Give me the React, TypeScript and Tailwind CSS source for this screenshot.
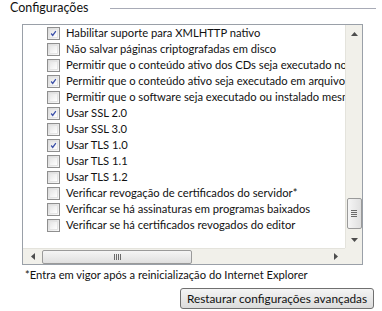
import React from 'react';

const rows: { label: string; checked: boolean }[] = [
  { label: 'Habilitar suporte para XMLHTTP nativo', checked: true },
  { label: 'Não salvar páginas criptografadas em disco', checked: false },
  { label: 'Permitir que o conteúdo ativo dos CDs seja executado no computador', checked: false },
  { label: 'Permitir que o conteúdo ativo seja executado em arquivos do computador', checked: true },
  { label: 'Permitir que o software seja executado ou instalado mesmo se a assinatura for inválida', checked: false },
  { label: 'Usar SSL 2.0', checked: true },
  { label: 'Usar SSL 3.0', checked: false },
  { label: 'Usar TLS 1.0', checked: true },
  { label: 'Usar TLS 1.1', checked: false },
  { label: 'Usar TLS 1.2', checked: false },
  { label: 'Verificar revogação de certificados do servidor*', checked: false },
  { label: 'Verificar se há assinaturas em programas baixados', checked: false },
  { label: 'Verificar se há certificados revogados do editor', checked: false },
];

function CheckBox({ checked }: { checked: boolean }) {
  return (
    <div className="w-[13px] h-[13px] shrink-0 border border-[#8f8f8f] bg-gradient-to-br from-[#d8d8d8] to-[#fafafa] p-px">
      <div className="w-full h-full border border-[#e4e4e4] bg-gradient-to-br from-[#e6e6e6] to-[#ffffff] flex items-center justify-center">
        {checked && (
          <svg width="9" height="9" viewBox="0 0 9 9">
            <path d="M1.5 4.5 L3.5 7 L7.5 1.5" fill="none" stroke="#3a4fa8" strokeWidth="1.6" />
          </svg>
        )}
      </div>
    </div>
  );
}

export default function App() {
  return (
    <div className="w-[382px] h-[311px] bg-white text-[11.2px] text-[#111] font-['Lato',sans-serif] leading-none overflow-hidden">
      <div className="flex items-center pl-[10px] pr-[6px] h-[17px]">
        <span className="text-[12.5px]">Configurações</span>
        <div className="flex-1 h-px bg-[#a8abb6] ml-[22px]" />
      </div>

      <div className="ml-[22px] mt-[7px] w-[341px] h-[241px] border border-[#9aa0a8] grid grid-cols-[1fr_17px] grid-rows-[1fr_16px]">
        <div className="overflow-hidden">
          {rows.map((r) => (
            <div key={r.label} className="h-[16px] flex items-center pl-[24px] gap-[6px] whitespace-nowrap">
              <CheckBox checked={r.checked} />
              <span>{r.label}</span>
            </div>
          ))}
        </div>

        <div className="bg-[#f1f0ea] border-l border-[#e4e3dc] flex flex-col items-center">
          <div className="h-[17px] w-full flex items-center justify-center">
            <svg width="7" height="4" viewBox="0 0 7 4"><path d="M0 4 L3.5 0 L7 4 Z" fill="#4d4d4d" /></svg>
          </div>
          <div className="flex-1" />
          <div className="w-[15px] h-[31px] border border-[#9a9a9a] rounded-[2px] bg-gradient-to-r from-[#f5f5f5] to-[#e0e0e0] flex flex-col items-center justify-center gap-px">
            <div className="w-[6px] h-px bg-[#6a6a6a]" />
            <div className="w-[6px] h-px bg-[#6a6a6a]" />
            <div className="w-[6px] h-px bg-[#6a6a6a]" />
            <div className="w-[6px] h-px bg-[#6a6a6a]" />
          </div>
          <div className="h-[16px] w-full flex items-center justify-center mt-[3px]">
            <svg width="7" height="4" viewBox="0 0 7 4"><path d="M0 0 L3.5 4 L7 0 Z" fill="#4d4d4d" /></svg>
          </div>
        </div>

        <div className="bg-[#f1f0ea] border-t border-[#e4e3dc] flex items-center">
          <div className="w-[19px] h-full flex items-center justify-center">
            <svg width="4" height="7" viewBox="0 0 4 7"><path d="M4 0 L0 3.5 L4 7 Z" fill="#4d4d4d" /></svg>
          </div>
          <div className="w-[150px] h-[14px] border border-[#9a9a9a] rounded-[2px] bg-gradient-to-b from-[#f5f5f5] to-[#e0e0e0] flex items-center justify-center gap-px">
            <div className="w-px h-[6px] bg-[#6a6a6a]" />
            <div className="w-px h-[6px] bg-[#6a6a6a]" />
            <div className="w-px h-[6px] bg-[#6a6a6a]" />
            <div className="w-px h-[6px] bg-[#6a6a6a]" />
          </div>
          <div className="flex-1" />
          <div className="w-[19px] h-full flex items-center justify-center">
            <svg width="4" height="7" viewBox="0 0 4 7"><path d="M0 0 L4 3.5 L0 7 Z" fill="#4d4d4d" /></svg>
          </div>
        </div>

        <div className="bg-[#f1f0ea]" />
      </div>

      <div className="pl-[25px] mt-[2px] h-[16px] flex items-center whitespace-nowrap">
        *Entra em vigor após a reinicialização do Internet Explorer
      </div>

      <div className="flex justify-end pr-[8px] mt-[5px]">
        <button className="w-[194px] h-[21px] border border-[#707070] rounded-[3px] bg-gradient-to-b from-[#f4f4f4] to-[#dcdcdc] flex items-center justify-center whitespace-nowrap text-[11.8px]">
          Restaurar configurações avançadas
        </button>
      </div>
    </div>
  );
}
